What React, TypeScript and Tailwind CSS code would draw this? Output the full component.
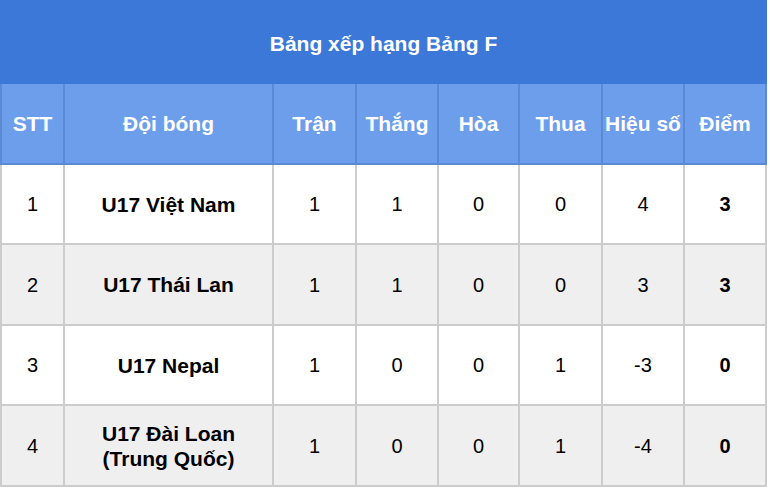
const cols = [63, 209, 83, 82, 81, 83, 82, 82];

const headers = ["STT", "Đội bóng", "Trận", "Thắng", "Hòa", "Thua", "Hiệu số", "Điểm"];

const rows = [
  { stt: 1, team: ["U17 Việt Nam"], played: 1, won: 1, draw: 0, lost: 0, diff: "4", pts: 3, h: "h-[80px]" },
  { stt: 2, team: ["U17 Thái Lan"], played: 1, won: 1, draw: 0, lost: 0, diff: "3", pts: 3, h: "h-[81px]" },
  { stt: 3, team: ["U17 Nepal"], played: 1, won: 0, draw: 0, lost: 1, diff: "-3", pts: 0, h: "h-[80px]" },
  { stt: 4, team: ["U17 Đài Loan", "(Trung Quốc)"], played: 1, won: 0, draw: 0, lost: 1, diff: "-4", pts: 0, h: "h-[81px]" },
];

export default function App() {
  return (
    <div className="w-[770px] h-[488px] bg-white overflow-hidden font-['Liberation_Sans',Arial,sans-serif]">
      <table className="table-fixed border-collapse w-[767px]">
        <colgroup>
          {cols.map((w, i) => (
            <col key={i} style={{ width: w }} />
          ))}
        </colgroup>
        <thead>
          <tr>
            <th colSpan={8} className="h-[82px] pt-1 bg-[#3c78d8] border-2 border-[#3c78d8] text-white text-[21px] font-bold text-center">
              Bảng xếp hạng Bảng F
            </th>
          </tr>
          <tr>
            {headers.map((h) => (
              <th key={h} className="h-[81px] bg-[#6d9eeb] border-2 border-[#5b89d4] text-white text-[21px] font-bold text-center whitespace-nowrap px-0">
                {h}
              </th>
            ))}
          </tr>
        </thead>
        <tbody>
          {rows.map((r, i) => (
            <tr key={r.stt} className={i % 2 ? "bg-[#efefef]" : "bg-white"}>
              <td className={`${r.h} border-2 border-[#cccccc] text-center text-[20px] text-black`}>{r.stt}</td>
              <td className="border-2 border-[#cccccc] text-center text-[21px] font-bold text-black leading-[25px]">
                {r.team.map((t) => (
                  <div key={t}>{t}</div>
                ))}
              </td>
              <td className="border-2 border-[#cccccc] text-center text-[20px] text-black">{r.played}</td>
              <td className="border-2 border-[#cccccc] text-center text-[20px] text-black">{r.won}</td>
              <td className="border-2 border-[#cccccc] text-center text-[20px] text-black">{r.draw}</td>
              <td className="border-2 border-[#cccccc] text-center text-[20px] text-black">{r.lost}</td>
              <td className="border-2 border-[#cccccc] text-center text-[20px] text-black">{r.diff}</td>
              <td className="border-2 border-[#cccccc] text-center text-[20px] font-bold text-black">{r.pts}</td>
            </tr>
          ))}
        </tbody>
      </table>
    </div>
  );
}
